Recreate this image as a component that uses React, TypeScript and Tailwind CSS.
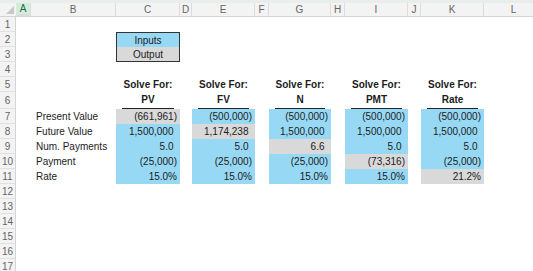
import React from "react";

const COLS = [16, 15, 85, 64, 12, 63, 14, 62, 14, 63, 13, 63, 60];
const LETTERS = ["", "A", "B", "C", "D", "E", "F", "G", "H", "I", "J", "K", "L"];
const ROW_H = [15, 15, 15, 15, 15, 17, 15, 15, 15, 15, 15, 15, 15, 15, 15, 15, 15];

const BLUE = "bg-[#97d9f5]";
const GRAY = "bg-[#d9d9d9]";

type Val = { t: string; g?: boolean; pad?: boolean };
const labels = ["Present Value", "Future Value", "Num. Payments", "Payment", "Rate"];
const data: Val[][] = [
  [{ t: "(661,961)", g: true }, { t: "(500,000)" }, { t: "(500,000)" }, { t: "(500,000)" }, { t: "(500,000)" }],
  [{ t: "1,500,000", pad: true }, { t: "1,174,238", g: true, pad: true }, { t: "1,500,000", pad: true }, { t: "1,500,000", pad: true }, { t: "1,500,000", pad: true }],
  [{ t: "5.0", pad: true }, { t: "5.0", pad: true }, { t: "6.6", g: true, pad: true }, { t: "5.0", pad: true }, { t: "5.0", pad: true }],
  [{ t: "(25,000)" }, { t: "(25,000)" }, { t: "(25,000)" }, { t: "(73,316)", g: true }, { t: "(25,000)" }],
  [{ t: "15.0%" }, { t: "15.0%" }, { t: "15.0%" }, { t: "15.0%" }, { t: "21.2%", g: true }],
];
const solve = ["PV", "FV", "N", "PMT", "Rate"];
const dataCols = [3, 5, 7, 9, 11];

function cellContent(row: number, col: number): React.ReactNode {
  const di = dataCols.indexOf(col);
  if (row === 2 && col === 3)
    return (
      <div className={`h-full ${BLUE} border-x border-t border-[#333] flex items-center justify-center`}>Inputs</div>
    );
  if (row === 3 && col === 3)
    return (
      <div className={`h-full ${GRAY} border-x border-b border-[#333] flex items-center justify-center`}>Output</div>
    );
  if (row === 5 && di >= 0)
    return <div className="h-full flex items-center justify-center font-bold">Solve For:</div>;
  if (row === 6 && di >= 0)
    return (
      <div className="h-full flex items-end">
        <div className="mx-[6px] flex-1 border-b border-[#222] text-center font-bold leading-[15px] pb-[1px]">
          {solve[di]}
        </div>
      </div>
    );
  if (row >= 7 && row <= 11) {
    if (col === 2)
      return <div className="h-full flex items-center pl-[5px]">{labels[row - 7]}</div>;
    if (di >= 0) {
      const v = data[row - 7][di];
      return (
        <div className={`h-full flex items-center justify-end ${v.g ? GRAY : BLUE} ${v.pad ? "pr-[6.5px]" : "pr-[3px]"}`}>
          {v.t}
        </div>
      );
    }
  }
  return null;
}

export default function App() {
  return (
    <div
      className="w-[533px] h-[271px] overflow-hidden bg-white text-[#1c1c1c] text-[10px] whitespace-nowrap"
      style={{ fontFamily: '"Liberation Sans", Arial, sans-serif' }}
    >
      <div className="h-[3px] bg-[#e9eeeb]" />
      {/* column header */}
      <div className="flex h-[14px] bg-[#f3f3f3] border-b border-[#d4d4d4]">
        {COLS.map((w, i) => (
          <div
            key={i}
            style={{ width: w }}
            className={`shrink-0 relative flex items-center justify-center text-[10px] leading-none ${
              i === 1 ? "bg-[#d3eddc] text-[#1e6b3a] border-b-2 border-[#2f8a4f]" : "text-[#666]"
            } ${i === 0 ? "" : "border-r border-[#dcdcdc]"}`}
          >
            {i === 0 ? (
              <div className="absolute right-[2px] bottom-[2px] w-0 h-0 border-l-[8px] border-l-transparent border-b-[8px] border-b-[#c8c8c8]" />
            ) : (
              LETTERS[i]
            )}
          </div>
        ))}
      </div>
      {ROW_H.map((h, ri) => {
        const row = ri + 1;
        return (
          <div key={row} className="flex" style={{ height: h }}>
            {COLS.map((w, ci) => (
              <div key={ci} style={{ width: w }} className="shrink-0 h-full">
                {ci === 0 ? (
                  <div className="h-full bg-[#f3f3f3] border-r border-[#d4d4d4] border-b border-b-[#e0e0e0] flex items-center justify-center text-[10px] text-[#666]">
                    {row}
                  </div>
                ) : (
                  cellContent(row, ci)
                )}
              </div>
            ))}
          </div>
        );
      })}
    </div>
  );
}
